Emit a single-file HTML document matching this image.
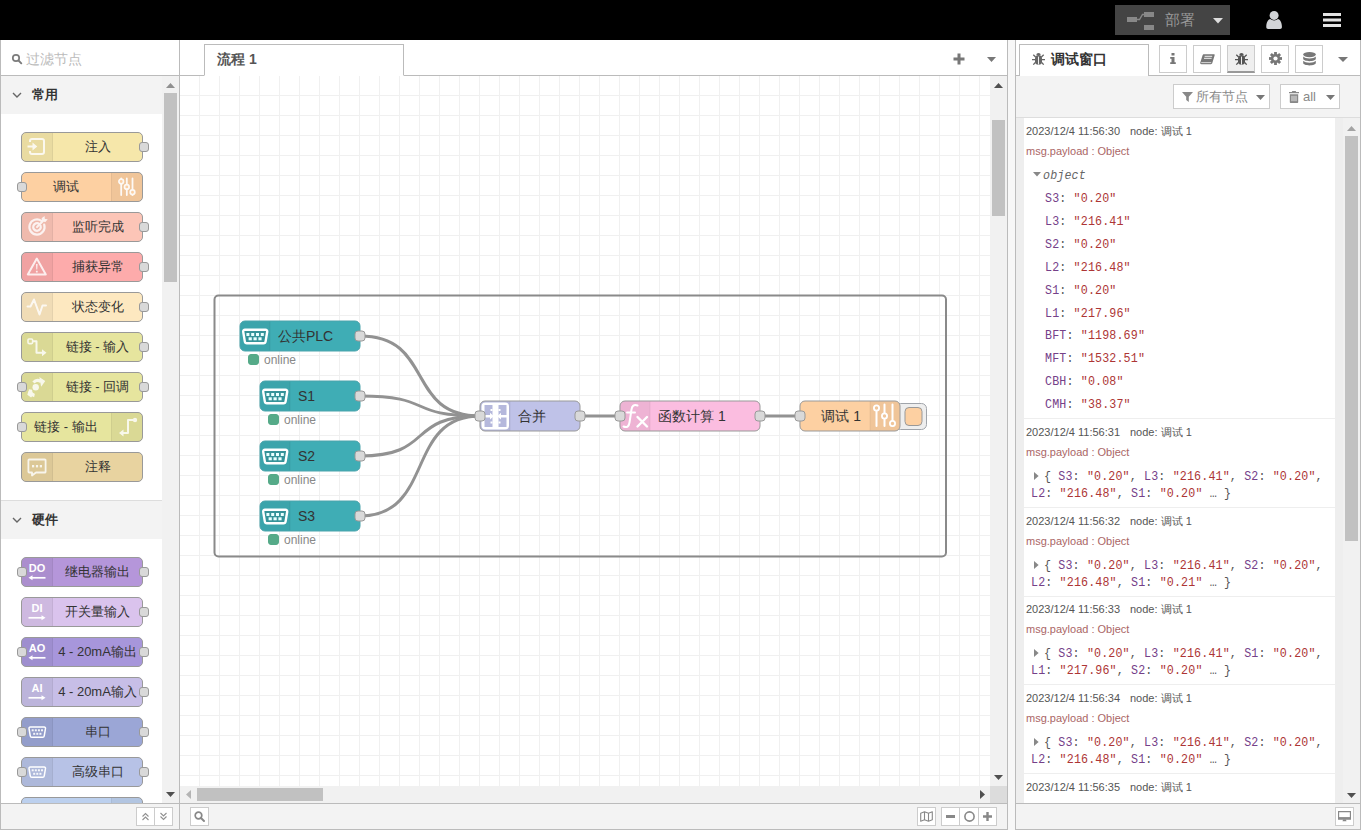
<!DOCTYPE html><html lang="zh"><head><meta charset="utf-8"><title>Node-RED</title><style>
*{box-sizing:border-box;margin:0;padding:0}
html,body{width:1361px;height:830px;overflow:hidden;background:#fff}
body{position:relative;font-family:"Liberation Sans",sans-serif;font-size:14px;color:#555;-webkit-font-smoothing:antialiased}
.abs{position:absolute}
#hdr{position:absolute;left:0;top:0;width:1361px;height:40px;background:#000}
#deploy{position:absolute;left:1115px;top:5px;width:115px;height:30px;background:#444}
#deploy .t{position:absolute;left:50px;top:0;line-height:30px;font-size:15px;color:#999;white-space:nowrap}
/* palette */
#pal{position:absolute;left:0;top:40px;width:180px;height:790px;border-left:1px solid #bbb;border-right:1px solid #bbb;border-bottom:1px solid #bbb;background:#fff;overflow:hidden}
#psearch{position:absolute;left:0;top:0;width:178px;height:36px;border-bottom:1px solid #bbb;background:#fff}
#psearch .t{position:absolute;left:25px;top:2px;line-height:35px;font-size:14px;color:#bbb;white-space:nowrap}
.cat{position:absolute;left:0;width:161px;height:38px;background:#f3f3f3}
.cat .t{position:absolute;left:31px;top:0;line-height:38px;font-size:13px;font-weight:bold;color:#333;white-space:nowrap}
.pn{position:absolute;left:20px;width:122px;height:30px;border:1px solid #999;border-radius:5px}
.pn .ic{position:absolute;top:0;width:30px;height:28px;background:rgba(0,0,0,.05)}
.pn .ic.l{left:0;border-right:1px solid rgba(0,0,0,.05);border-radius:4px 0 0 4px;width:31px}
.pn .ic.r{right:0;border-left:1px solid rgba(0,0,0,.05);border-radius:0 4px 4px 0;width:31px}
.pn .ic svg{position:absolute;left:0;top:0;width:30px;height:28px}
.pn .ic.r svg{left:1px}
.pn .lb{position:absolute;top:0;height:28px;line-height:27px;font-size:13px;color:#333;white-space:nowrap;text-align:center}
.pn .lb.l{left:31px;width:89px}
.pn .lb.r{left:0;width:88px}
.port{position:absolute;width:10px;height:10px;border:1px solid #999;background:#d9d9d9;border-radius:3px;top:9px}
.port.r{left:117px}.port.l{left:-5px}
/* scrollbars */
.sbt{position:absolute;background:#f1f1f1}
.sbh{position:absolute;background:#c1c1c1}
/* workspace */
#ws{position:absolute;left:180px;top:40px;width:828px;height:790px;border-right:1px solid #bbb;border-bottom:1px solid #bbb;background:#fff}
#wtabs{position:absolute;left:0;top:0;width:827px;height:36px;border-bottom:1px solid #bbb;background:#fff}
#wtab{position:absolute;left:24px;top:4px;width:200px;height:32px;border:1px solid #bbb;border-bottom:1px solid #fff;background:#fff}
#wtab .t{position:absolute;left:12px;top:0;line-height:29px;font-size:14px;color:#555;white-space:nowrap;font-weight:bold}
#chart{position:absolute;left:0;top:36px;width:810px;height:710px;background-color:#fff;
 background-image:linear-gradient(to right,#f0f0f0 1px,transparent 1px),linear-gradient(to bottom,#f0f0f0 1px,transparent 1px);
 background-size:20px 20px;background-position:19px 19px;overflow:hidden}
.foot{position:absolute;height:26px;background:#f3f3f3;border-top:1px solid #bbb}
.fbtn{position:absolute;top:3px;height:19px;background:#fff;border:1px solid #ccc}
/* sidebar */
#sep{position:absolute;left:1008px;top:40px;width:7px;height:790px;background:#f7f7f7}
#sb{position:absolute;left:1015px;top:40px;width:346px;height:790px;border-left:1px solid #bbb;border-right:1px solid #bbb;border-bottom:1px solid #bbb;background:#fff;overflow:hidden}
#stabs{position:absolute;left:0;top:0;width:344px;height:36px;border-bottom:1px solid #bbb;background:#fff}
#stab{position:absolute;left:3px;top:4px;width:130px;height:32px;border:1px solid #bbb;border-bottom:none;background:#fff}
#stab .t{position:absolute;left:31px;top:0;line-height:29px;font-size:14px;color:#333;font-weight:bold;white-space:nowrap}
.sbtn{position:absolute;top:5px;width:28px;height:28px;border:1px solid #ccc;background:#fff}
.sbtn.act{background:#efefef;border-bottom:2px solid #999}
#dtool{position:absolute;left:0;top:36px;width:344px;height:42px;background:#f3f3f3;border-bottom:1px solid #ddd}
.dbtn{position:absolute;top:8px;height:25px;background:#fff;border:1px solid #ccc;font-size:13px;color:#888;white-space:nowrap}
#dmsgs{position:absolute;left:0;top:78px;width:327px;height:685px;background:#fff;overflow:hidden}
.msg{position:absolute;left:0;width:327px;border-left:8px solid #eee;border-right:8px solid #eee;border-bottom:1px solid #eee;background:transparent}
.msg .d{position:absolute;left:2px;top:7px;font-size:11px;line-height:13px;color:#555;white-space:pre}
.msg .n{position:absolute;left:106px;top:7px;font-size:11px;line-height:13px;color:#555;white-space:pre}
.msg .tp{position:absolute;left:2px;top:27px;font-size:11px;line-height:13px;color:#a66;white-space:pre}
.mono{font-family:"Liberation Mono",monospace;font-size:11.67px;letter-spacing:.15px;white-space:pre;color:#555}
.msg .ln{position:absolute;line-height:15px;height:15px;transform:scaleY(1.07);transform-origin:0 10.6px}
.k{color:#754089}.s{color:#ad3535}
</style></head><body>
<div id="hdr">
<div id="deploy"><svg class="abs" style="left:0;top:0" width="50" height="30" viewBox="0 0 50 30"><g fill="#888"><rect x="12" y="12" width="10" height="5"/><rect x="29" y="7" width="10" height="5"/><rect x="29" y="20" width="10" height="5"/></g><path d="M22 14.5 L24.5 14.5 L27.5 9.5 L29 9.5" stroke="#888" stroke-width="1.4" fill="none"/></svg>
<span class="t">部署</span>
<svg class="abs" style="left:98px;top:13px" width="10" height="6" viewBox="0 0 10 6"><path d="M0 0h10L5 5.5z" fill="#ddd"/></svg></div>
<svg class="abs" style="left:1265px;top:10px" width="18" height="20" viewBox="0 0 18 20"><g fill="#d2d4d7"><circle cx="9.100" cy="5.400" r="4.500"/><path d="M1.300 17.200c-.2-4.600 1.600-7.600 4-8.200c1 .9 2.300 1.400 3.800 1.400s2.800-.5 3.800-1.400c2.400.6 4.200 3.600 4 8.200c0 1-.8 1.700-1.800 1.700H3.100c-1 0-1.800-.7-1.800-1.700z"/></g></svg>
<svg class="abs" style="left:1323px;top:13px" width="18" height="14" viewBox="0 0 18 14"><g fill="#e4e4e4"><rect y="0" width="18" height="3"/><rect y="5.500" width="18" height="3"/><rect y="11" width="18" height="3"/></g></svg>
</div>
<div id="pal">
<div id="psearch"><svg class="abs" style="left:10px;top:13px" width="12" height="12" viewBox="0 0 12 12"><circle cx="5" cy="5" r="3.200" stroke="#7c7c7c" stroke-width="1.700" fill="none"/><path d="M7.500 7.500l2.800 2.800" stroke="#7c7c7c" stroke-width="1.900" stroke-linecap="round"/></svg><span class="t">过滤节点</span></div>
<div class="cat" style="top:36px"><svg class="abs" style="left:11px;top:16px" width="10" height="7" viewBox="0 0 10 7"><path d="M1 1l4 4 4-4" stroke="#666" stroke-width="1.400" fill="none"/></svg><span class="t">常用</span></div>
<div class="pn" style="top:92px;background:#f6e7aa"><div class="ic l"><svg viewBox="0 0 30 28" opacity="0.82"><path d="M8 9V8a2 2 0 0 1 2-2h10a2 2 0 0 1 2 2v11a2 2 0 0 1-2 2H10a2 2 0 0 1-2-2v-1" stroke="#fff" stroke-width="2" fill="none"/><path d="M5.500 12.400h5V9.400l4.800 4.100-4.800 4.100v-3H5.500z" fill="#fff"/></svg></div><div class="lb l">注入</div><div class="port r"></div></div>
<div class="pn" style="top:132px;background:#fdd0a2"><div class="ic r"><svg viewBox="0 0 30 28" opacity="0.9"><g stroke="#fff" stroke-width="1.800" fill="none" stroke-linecap="round"><path d="M8.200 5.500V22M13.800 5.500V22M19.500 5.500V22"/></g><g stroke="#fff" stroke-width="1.700" fill="#fdd0a2"><circle cx="8.200" cy="8.500" r="2.300"/><circle cx="13.800" cy="13.900" r="2.300"/><circle cx="19.500" cy="19.200" r="2.300"/></g></svg></div><div class="lb r">调试</div><div class="port l"></div></div>
<div class="pn" style="top:172px;background:#fcc5b7"><div class="ic l"><svg viewBox="0 0 30 28" opacity="0.82"><g stroke="#fff" fill="none" stroke-width="2.200" stroke-linecap="round"><path d="M19.400 7.800A7.600 7.600 0 1 0 22.200 11.600"/><path d="M17.200 10.900A3.800 3.800 0 1 0 18.600 12.800"/></g><path d="M15 14L20.500 8.500" stroke="#fff" stroke-width="2" stroke-linecap="round"/><path d="M19.600 5.200l.5 3.300 3.300.5 2.400-2.700-2.900-.4-.4-2.900z" fill="#fff"/></svg></div><div class="lb l">监听完成</div><div class="port r"></div></div>
<div class="pn" style="top:212px;background:#fdabab"><div class="ic l"><svg viewBox="0 0 30 28" opacity="0.82"><path d="M14.800 5.500L5.800 21.500h18z" stroke="#fff" stroke-width="2" fill="none" stroke-linejoin="round"/><path d="M14 11h1.600l-.3 5.500h-1zM13.900 17.700h1.800v1.700h-1.800z" fill="#fff"/></svg></div><div class="lb l">捕获异常</div><div class="port r"></div></div>
<div class="pn" style="top:252px;background:#fde8c0"><div class="ic l"><svg viewBox="0 0 30 28" opacity="0.82"><path d="M5.500 13.500H8.500L12 6.500L17.500 21.500L20.500 12.500H24" stroke="#fff" stroke-width="2" fill="none" stroke-linecap="round" stroke-linejoin="round"/></svg></div><div class="lb l">状态变化</div><div class="port r"></div></div>
<div class="pn" style="top:292px;background:#e6e59e"><div class="ic l"><svg viewBox="0 0 30 28" opacity="0.82"><rect x="6" y="6" width="4.600" height="4.600" rx="1" stroke="#fff" stroke-width="1.600" fill="none"/><path d="M10.600 8.300H14.500V19.800H20.500" stroke="#fff" stroke-width="2" fill="none" stroke-linejoin="round"/><path d="M20 16.300l4.500 3.500-4.500 3.500z" fill="#fff"/></svg></div><div class="lb l">链接 - 输入</div><div class="port r"></div></div>
<div class="pn" style="top:332px;background:#e6e59e"><div class="ic l"><svg viewBox="0 0 30 28" opacity="0.82"><circle cx="13.700" cy="14.200" r="3.200" fill="#fff"/><path d="M11.500 9.500Q14.500 6 19 8.500" stroke="#fff" stroke-width="3.200" fill="none"/><path d="M16.800 4.300l6.400 3.200-3.200 6.400z" fill="#fff" transform="rotate(8 20 8)"/><path d="M8.500 16.500Q8 21.500 12.500 22.500" stroke="#fff" stroke-width="3.400" fill="none"/><path d="M6.500 17.800l5.800 3-3.200 3.800-3.800-2.800z" fill="#fff"/></svg></div><div class="lb l">链接 - 回调</div><div class="port l"></div><div class="port r"></div></div>
<div class="pn" style="top:372px;background:#e6e59e"><div class="ic r"><svg viewBox="0 0 30 28" opacity="0.82"><path d="M10 20H15V7H20" stroke="#fff" stroke-width="2" fill="none" stroke-linejoin="round"/><path d="M10.500 16.500L6 20l4.500 3.500z" fill="#fff"/><circle cx="22" cy="7" r="2.200" fill="#fff"/></svg></div><div class="lb r">链接 - 输出</div><div class="port l"></div></div>
<div class="pn" style="top:412px;background:#e8d3a0"><div class="ic l"><svg viewBox="0 0 30 28" opacity="0.82"><path d="M7.200 6.500h15.600a.8.800 0 0 1 .8.800v11.400a.8.800 0 0 1-.8.800H14l-4 3v-3H7.200a.8.800 0 0 1-.8-.8V7.300a.8.800 0 0 1 .8-.8z" stroke="#fff" stroke-width="1.800" fill="none" stroke-linejoin="round"/><g fill="#fff"><rect x="10" y="12" width="2.200" height="2.400"/><rect x="13.900" y="12" width="2.200" height="2.400"/><rect x="17.800" y="12" width="2.200" height="2.400"/></g></svg></div><div class="lb l">注释</div></div>
<div class="abs" style="left:0;top:460px;width:161px;height:1px;background:#ddd"></div>
<div class="cat" style="top:461px"><svg class="abs" style="left:11px;top:16px" width="10" height="7" viewBox="0 0 10 7"><path d="M1 1l4 4 4-4" stroke="#666" stroke-width="1.400" fill="none"/></svg><span class="t">硬件</span></div>
<div class="pn" style="top:517px;background:#b596da"><div class="ic l"><svg viewBox="0 0 30 28" opacity="1"><text x="15" y="14" text-anchor="middle" font-family="Liberation Sans,sans-serif" font-weight="bold" font-size="11" fill="#fff">DO</text><path d="M9.500 19.800H23.500" stroke="#fff" stroke-width="1.700"/><path d="M10.500 17.300L6.500 19.800l4 2.500z" fill="#fff"/></svg></div><div class="lb l">继电器输出</div><div class="port l"></div><div class="port r"></div></div>
<div class="pn" style="top:557px;background:#dac3ed"><div class="ic l"><svg viewBox="0 0 30 28" opacity="1"><text x="15" y="14" text-anchor="middle" font-family="Liberation Sans,sans-serif" font-weight="bold" font-size="11" fill="#fff">DI</text><path d="M6.500 19.800H20.500" stroke="#fff" stroke-width="1.700"/><path d="M19.500 17.300l4 2.500-4 2.500z" fill="#fff"/></svg></div><div class="lb l">开关量输入</div><div class="port r"></div></div>
<div class="pn" style="top:597px;background:#a796db"><div class="ic l"><svg viewBox="0 0 30 28" opacity="1"><text x="15" y="14" text-anchor="middle" font-family="Liberation Sans,sans-serif" font-weight="bold" font-size="11" fill="#fff">AO</text><path d="M9.500 19.800H23.500" stroke="#fff" stroke-width="1.700"/><path d="M10.500 17.300L6.500 19.800l4 2.500z" fill="#fff"/></svg></div><div class="lb l">4 - 20mA输出</div><div class="port l"></div><div class="port r"></div></div>
<div class="pn" style="top:637px;background:#c7bee7"><div class="ic l"><svg viewBox="0 0 30 28" opacity="1"><text x="15" y="14" text-anchor="middle" font-family="Liberation Sans,sans-serif" font-weight="bold" font-size="11" fill="#fff">AI</text><path d="M6.500 19.800H20.500" stroke="#fff" stroke-width="1.700"/><path d="M19.500 17.300l4 2.500-4 2.500z" fill="#fff"/></svg></div><div class="lb l">4 - 20mA输入</div><div class="port r"></div></div>
<div class="pn" style="top:677px;background:#9ba6d6"><div class="ic l"><svg viewBox="0 0 30 28" opacity="1"><path d="M8.300 9h13.900a1.300 1.300 0 0 1 1.300 1.500l-1.300 7.500a1.500 1.500 0 0 1-1.500 1.300H9.800a1.500 1.500 0 0 1-1.500-1.300L7 10.500A1.300 1.300 0 0 1 8.300 9z" stroke="#fff" stroke-width="1.500" fill="none"/><g fill="#fff" opacity=".9"><rect x="9.700" y="11.300" width="2" height="2"/><rect x="12.800" y="11.300" width="2" height="2"/><rect x="15.900" y="11.300" width="2" height="2"/><rect x="19" y="11.300" width="2" height="2"/><rect x="11.200" y="14.800" width="2" height="2"/><rect x="14.300" y="14.800" width="2" height="2"/><rect x="17.400" y="14.800" width="2" height="2"/></g></svg></div><div class="lb l">串口</div><div class="port l"></div><div class="port r"></div></div>
<div class="pn" style="top:717px;background:#b7c2e6"><div class="ic l"><svg viewBox="0 0 30 28" opacity="1"><path d="M8.300 9h13.900a1.300 1.300 0 0 1 1.300 1.500l-1.300 7.500a1.500 1.500 0 0 1-1.500 1.300H9.800a1.500 1.500 0 0 1-1.500-1.300L7 10.500A1.300 1.300 0 0 1 8.300 9z" stroke="#fff" stroke-width="1.500" fill="none"/><g fill="#fff" opacity=".9"><rect x="9.700" y="11.300" width="2" height="2"/><rect x="12.800" y="11.300" width="2" height="2"/><rect x="15.900" y="11.300" width="2" height="2"/><rect x="19" y="11.300" width="2" height="2"/><rect x="11.200" y="14.800" width="2" height="2"/><rect x="14.300" y="14.800" width="2" height="2"/><rect x="17.400" y="14.800" width="2" height="2"/></g></svg></div><div class="lb l">高级串口</div><div class="port l"></div><div class="port r"></div></div>
<div class="pn" style="top:757px;background:#bcd0ee"><div class="ic r"><svg viewBox="0 0 30 28" opacity="0.9"><ellipse cx="14" cy="8.500" rx="5" ry="3.500" fill="#fff"/></svg></div><div class="lb r"></div></div>
<div class="sbt" style="left:161px;top:36px;width:17px;height:727px"></div>
<div class="sbh" style="left:163px;top:53px;width:13px;height:189px"></div>
<svg class="abs" style="left:165px;top:43px" width="9" height="5" viewBox="0 0 9 5"><path d="M0 5h9L4.500 0z" fill="#909090"/></svg>
<svg class="abs" style="left:165px;top:752px" width="9" height="5" viewBox="0 0 9 5"><path d="M0 0h9L4.500 5z" fill="#505050"/></svg>
<div class="foot" style="left:0;top:763px;width:178px">
<div class="fbtn" style="left:135px;width:19px"><svg class="abs" style="left:4px;top:4px" width="9" height="9" viewBox="0 0 9 9"><path d="M1.500 4.500l3-3 3 3M1.500 8l3-3 3 3" stroke="#909090" stroke-width="1.100" fill="none"/></svg></div>
<div class="fbtn" style="left:153px;width:19px"><svg class="abs" style="left:4px;top:4px" width="9" height="9" viewBox="0 0 9 9"><path d="M1.500 1l3 3 3-3M1.500 4.500l3 3 3-3" stroke="#909090" stroke-width="1.100" fill="none"/></svg></div>
</div>
</div>
<div id="ws">
<div id="wtabs"><div id="wtab"><span class="t">流程 1</span></div>
<svg class="abs" style="left:773px;top:13px" width="12" height="12" viewBox="0 0 12 12"><path d="M4.500 .5h3v4h4v3h-4v4h-3v-4h-4v-3h4z" fill="#777"/></svg>
<svg class="abs" style="left:807px;top:17px" width="9" height="5" viewBox="0 0 9 5"><path d="M0 0h9L4.500 5z" fill="#777"/></svg>
</div>
<div id="chart">
<svg class="abs" style="left:0;top:0" width="810" height="710" viewBox="180 76 810 710" font-family="Liberation Sans,sans-serif">
<rect x="214.500" y="295.500" width="731.500" height="261" rx="4" fill="none" stroke="#8a8a8a" stroke-width="2"/>
<path d="M360 336 C435.0 336 405.0 416 480 416" stroke="#929292" stroke-width="3" fill="none"/>
<path d="M360 396 C435.0 396 405.0 416 480 416" stroke="#929292" stroke-width="3" fill="none"/>
<path d="M360 456 C435.0 456 405.0 416 480 416" stroke="#929292" stroke-width="3" fill="none"/>
<path d="M360 516 C435.0 516 405.0 416 480 416" stroke="#929292" stroke-width="3" fill="none"/>
<path d="M580 416 C610.0 416 590.0 416 620 416" stroke="#929292" stroke-width="3" fill="none"/>
<path d="M760 416 C790.0 416 770.0 416 800 416" stroke="#929292" stroke-width="3" fill="none"/>
<rect x="240" y="321" width="120" height="30" rx="5" fill="#3fadb5" stroke="#4aa3ab" stroke-width="1"/><path d="M245 321.5h25v29h-25a4.500 4.500 0 0 1-4.500-4.500v-20a4.500 4.500 0 0 1 4.500-4.500z" fill="rgba(0,0,0,0.05)"/><path d="M270 321.5v29" stroke="rgba(0,0,0,0.06)" stroke-width="1"/><g transform="translate(240,321)"><path d="M5 8.700h20.400a1.800 1.800 0 0 1 1.800 2.100l-1.600 9.600a2.200 2.200 0 0 1-2.200 1.900H7a2.200 2.200 0 0 1-2.200-1.900L3.200 10.800A1.800 1.800 0 0 1 5 8.700z" stroke="#fff" stroke-width="2.400" fill="rgba(0,0,0,0.1)"/><g fill="#e8ffff"><rect x="6.400" y="12" width="3" height="3"/><rect x="11.200" y="12" width="3" height="3"/><rect x="16" y="12" width="3" height="3"/><rect x="20.800" y="12" width="3" height="3"/><rect x="8.600" y="16.300" width="3.200" height="3"/><rect x="13.500" y="16.300" width="3.200" height="3"/><rect x="18.400" y="16.300" width="3.200" height="3"/></g></g><text x="278" y="341" font-size="14" fill="#333">公共PLC</text><rect x="355.0" y="331" width="10" height="10" rx="3" fill="#d9d9d9" stroke="#999" stroke-width="1"/><rect x="248.5" y="354.5" width="10" height="10" rx="2.500" fill="#5a8" stroke="#5a8"/><text x="264" y="363.5" font-size="12" fill="#888">online</text>
<rect x="260" y="381" width="100" height="30" rx="5" fill="#3fadb5" stroke="#4aa3ab" stroke-width="1"/><path d="M265 381.5h25v29h-25a4.500 4.500 0 0 1-4.500-4.500v-20a4.500 4.500 0 0 1 4.500-4.500z" fill="rgba(0,0,0,0.05)"/><path d="M290 381.5v29" stroke="rgba(0,0,0,0.06)" stroke-width="1"/><g transform="translate(260,381)"><path d="M5 8.700h20.400a1.800 1.800 0 0 1 1.800 2.100l-1.600 9.600a2.200 2.200 0 0 1-2.200 1.900H7a2.200 2.200 0 0 1-2.200-1.900L3.200 10.800A1.800 1.800 0 0 1 5 8.700z" stroke="#fff" stroke-width="2.400" fill="rgba(0,0,0,0.1)"/><g fill="#e8ffff"><rect x="6.400" y="12" width="3" height="3"/><rect x="11.200" y="12" width="3" height="3"/><rect x="16" y="12" width="3" height="3"/><rect x="20.800" y="12" width="3" height="3"/><rect x="8.600" y="16.300" width="3.200" height="3"/><rect x="13.500" y="16.300" width="3.200" height="3"/><rect x="18.400" y="16.300" width="3.200" height="3"/></g></g><text x="298" y="401" font-size="14" fill="#333">S1</text><rect x="355.0" y="391" width="10" height="10" rx="3" fill="#d9d9d9" stroke="#999" stroke-width="1"/><rect x="268.5" y="414.5" width="10" height="10" rx="2.500" fill="#5a8" stroke="#5a8"/><text x="284" y="423.5" font-size="12" fill="#888">online</text>
<rect x="260" y="441" width="100" height="30" rx="5" fill="#3fadb5" stroke="#4aa3ab" stroke-width="1"/><path d="M265 441.5h25v29h-25a4.500 4.500 0 0 1-4.500-4.500v-20a4.500 4.500 0 0 1 4.500-4.500z" fill="rgba(0,0,0,0.05)"/><path d="M290 441.5v29" stroke="rgba(0,0,0,0.06)" stroke-width="1"/><g transform="translate(260,441)"><path d="M5 8.700h20.400a1.800 1.800 0 0 1 1.800 2.100l-1.600 9.600a2.200 2.200 0 0 1-2.200 1.900H7a2.200 2.200 0 0 1-2.200-1.900L3.200 10.800A1.800 1.800 0 0 1 5 8.700z" stroke="#fff" stroke-width="2.400" fill="rgba(0,0,0,0.1)"/><g fill="#e8ffff"><rect x="6.400" y="12" width="3" height="3"/><rect x="11.200" y="12" width="3" height="3"/><rect x="16" y="12" width="3" height="3"/><rect x="20.800" y="12" width="3" height="3"/><rect x="8.600" y="16.300" width="3.200" height="3"/><rect x="13.500" y="16.300" width="3.200" height="3"/><rect x="18.400" y="16.300" width="3.200" height="3"/></g></g><text x="298" y="461" font-size="14" fill="#333">S2</text><rect x="355.0" y="451" width="10" height="10" rx="3" fill="#d9d9d9" stroke="#999" stroke-width="1"/><rect x="268.5" y="474.5" width="10" height="10" rx="2.500" fill="#5a8" stroke="#5a8"/><text x="284" y="483.5" font-size="12" fill="#888">online</text>
<rect x="260" y="501" width="100" height="30" rx="5" fill="#3fadb5" stroke="#4aa3ab" stroke-width="1"/><path d="M265 501.5h25v29h-25a4.500 4.500 0 0 1-4.500-4.500v-20a4.500 4.500 0 0 1 4.500-4.500z" fill="rgba(0,0,0,0.05)"/><path d="M290 501.5v29" stroke="rgba(0,0,0,0.06)" stroke-width="1"/><g transform="translate(260,501)"><path d="M5 8.700h20.400a1.800 1.800 0 0 1 1.800 2.100l-1.600 9.600a2.200 2.200 0 0 1-2.200 1.900H7a2.200 2.200 0 0 1-2.200-1.900L3.200 10.800A1.800 1.800 0 0 1 5 8.700z" stroke="#fff" stroke-width="2.400" fill="rgba(0,0,0,0.1)"/><g fill="#e8ffff"><rect x="6.400" y="12" width="3" height="3"/><rect x="11.200" y="12" width="3" height="3"/><rect x="16" y="12" width="3" height="3"/><rect x="20.800" y="12" width="3" height="3"/><rect x="8.600" y="16.300" width="3.200" height="3"/><rect x="13.500" y="16.300" width="3.200" height="3"/><rect x="18.400" y="16.300" width="3.200" height="3"/></g></g><text x="298" y="521" font-size="14" fill="#333">S3</text><rect x="355.0" y="511" width="10" height="10" rx="3" fill="#d9d9d9" stroke="#999" stroke-width="1"/><rect x="268.5" y="534.5" width="10" height="10" rx="2.500" fill="#5a8" stroke="#5a8"/><text x="284" y="543.5" font-size="12" fill="#888">online</text>
<rect x="480" y="401" width="100" height="30" rx="5" fill="#bfc2e8" stroke="#999" stroke-width="1"/><path d="M485 401.5h25v29h-25a4.500 4.500 0 0 1-4.500-4.500v-20a4.500 4.500 0 0 1 4.500-4.500z" fill="rgba(0,0,0,0.05)"/><path d="M510 401.5v29" stroke="rgba(0,0,0,0.06)" stroke-width="1"/><g transform="translate(480,401)" fill="#fff"><path fill-rule="evenodd" d="M5.500 1.500h19.500a4 4 0 0 1 4 4v19a4 4 0 0 1-4 4h-19.500a4 4 0 0 1-4-4v-19a4 4 0 0 1 4-4zM4.500 4v22h8v-22zM18.500 4v22h8v-22z"/><rect x="10.500" y="8" width="2" height="2"/><rect x="10.500" y="20.500" width="2" height="2"/><rect x="18.500" y="8" width="2" height="2"/><rect x="18.500" y="20.500" width="2" height="2"/><path d="M4 14h6v-2.200l3.800 3.400-3.800 3.400v-2.200H4z"/><path d="M27 14h-6v-2.200l-3.800 3.400 3.800 3.400v-2.200H27z"/></g><text x="518" y="421" font-size="14" fill="#333">合并</text><rect x="475.0" y="411" width="10" height="10" rx="3" fill="#d9d9d9" stroke="#999" stroke-width="1"/><rect x="575.0" y="411" width="10" height="10" rx="3" fill="#d9d9d9" stroke="#999" stroke-width="1"/>
<rect x="620" y="401" width="140" height="30" rx="5" fill="#fbbde0" stroke="#999" stroke-width="1"/><path d="M625 401.5h25v29h-25a4.500 4.500 0 0 1-4.500-4.500v-20a4.500 4.500 0 0 1 4.500-4.500z" fill="rgba(0,0,0,0.05)"/><path d="M650 401.5v29" stroke="rgba(0,0,0,0.06)" stroke-width="1"/><g transform="translate(620,401)" stroke="#fff" fill="none" stroke-linecap="round"><path d="M17.500 4.500c-3.500-1.500-5.500.5-6 4l-2 13c-.6 4-2.500 5.500-6 4" stroke-width="2"/><path d="M7 11.500h8" stroke-width="2"/><path d="M17.500 16l9.500 9.500M27 16l-9.500 9.500" stroke-width="2.400"/></g><text x="658" y="421" font-size="14" fill="#333">函数计算 1</text><rect x="615.0" y="411" width="10" height="10" rx="3" fill="#d9d9d9" stroke="#999" stroke-width="1"/><rect x="755.0" y="411" width="10" height="10" rx="3" fill="#d9d9d9" stroke="#999" stroke-width="1"/>
<rect x="895.500" y="403.500" width="31" height="26" rx="5" fill="#eee" stroke="#a0a4aa"/>
<rect x="905" y="407.500" width="17" height="18" rx="4" fill="#fdd0a2" stroke="#999"/>
<rect x="800" y="401" width="100" height="30" rx="5" fill="#fdd0a2" stroke="#999" stroke-width="1"/><path d="M870 401.5h25a4.500 4.500 0 0 1 4.500 4.500v20a4.500 4.500 0 0 1-4.500 4.500h-25z" fill="rgba(0,0,0,0.05)"/><path d="M870 401.5v29" stroke="rgba(0,0,0,0.06)" stroke-width="1"/><g transform="translate(870,401)"><g stroke="#fff" stroke-width="2" fill="none" stroke-linecap="round"><path d="M6.500 5V25M14.500 3.500V25M22.500 3.500V25"/></g><g stroke="#fff" stroke-width="1.800" fill="#f0c599"><circle cx="6.500" cy="7" r="2.600"/><circle cx="14.500" cy="15" r="2.600"/><circle cx="22.500" cy="22.500" r="2.600"/></g></g><text x="861" y="421" font-size="14" fill="#333" text-anchor="end">调试 1</text><rect x="795.0" y="411" width="10" height="10" rx="3" fill="#d9d9d9" stroke="#999" stroke-width="1"/>
</svg>
</div>
<div class="sbt" style="left:810px;top:36px;width:17px;height:710px"></div>
<div class="sbh" style="left:812px;top:80px;width:13px;height:96px"></div>
<svg class="abs" style="left:814px;top:43px" width="9" height="5" viewBox="0 0 9 5"><path d="M0 5h9L4.500 0z" fill="#505050"/></svg>
<svg class="abs" style="left:814px;top:735px" width="9" height="5" viewBox="0 0 9 5"><path d="M0 0h9L4.500 5z" fill="#505050"/></svg>
<div class="sbt" style="left:0;top:746px;width:810px;height:17px"></div>
<div class="sbh" style="left:17px;top:748px;width:126px;height:13px"></div>
<svg class="abs" style="left:6px;top:750px" width="5" height="9" viewBox="0 0 5 9"><path d="M5 0v9L0 4.500z" fill="#b4b4b4"/></svg>
<svg class="abs" style="left:800px;top:750px" width="5" height="9" viewBox="0 0 5 9"><path d="M0 0v9L5 4.500z" fill="#505050"/></svg>
<div class="abs" style="left:810px;top:746px;width:17px;height:17px;background:#dcdcdc"></div>
<div class="foot" style="left:0;top:763px;width:827px">
<div class="fbtn" style="left:10px;width:19px"><svg class="abs" style="left:3px;top:3px" width="11" height="11" viewBox="0 0 11 11"><circle cx="4.500" cy="4.500" r="3.300" stroke="#888" stroke-width="1.700" fill="none"/><path d="M7 7l3 3" stroke="#888" stroke-width="1.900" stroke-linecap="round"/></svg></div>
<div class="fbtn" style="left:737px;width:19px"><svg class="abs" style="left:2px;top:3px" width="13" height="11" viewBox="0 0 13 11"><path d="M.7 2.200L4.500.8l4 1.400L12.300.8v8L8.500 10.200l-4-1.400L.7 10.200zM4.500.8v8M8.500 2.200v8" stroke="#888" stroke-width="1.100" fill="none" stroke-linejoin="round"/></svg></div>
<div class="fbtn" style="left:761px;width:19px"><div class="abs" style="left:4px;top:7px;width:9px;height:2.500px;background:#888"></div></div>
<div class="fbtn" style="left:779px;width:20px"><svg class="abs" style="left:4px;top:3px" width="11" height="11" viewBox="0 0 11 11"><circle cx="5.500" cy="5.500" r="4.600" stroke="#888" stroke-width="1.600" fill="none"/></svg></div>
<div class="fbtn" style="left:798px;width:19px"><svg class="abs" style="left:4px;top:4px" width="9" height="9" viewBox="0 0 9 9"><path d="M3.300 0h2.400v3.300H9v2.400H5.700V9H3.300V5.700H0V3.300h3.300z" fill="#888"/></svg></div>
</div>
</div>
<div id="sep"></div>
<div id="sb">
<div id="stabs">
<div id="stab"><svg class="abs" style="left:12px;top:8px" width="13" height="12" viewBox="0 0 13 12"><g fill="#666"><path d="M3 5.600a3.500 3.500 0 0 1 7 0v2.600a3.500 3.500 0 0 1-7 0z"/><path d="M4.300 1.900a2.200 1.900 0 0 1 4.400 0z"/></g><path d="M0 6.700h13M1.300 1.800l2.300 2.200M11.700 1.800l-2.300 2.200M1.300 11.600l2.300-2.300M11.700 11.600l-2.300-2.300" stroke="#666" stroke-width="1.300" fill="none"/><path d="M6.500 3.600v7.900" stroke="#fff" stroke-width=".9"/></svg><span class="t">调试窗口</span></div>
<div class="sbtn" style="left:143px"><svg class="abs" style="left:10px;top:7px" width="6" height="11" viewBox="0 0 6 11"><path d="M1.500 0h3v2.500h-3zM.2 4h4.300v5.300h1.300V11H.2V9.300h1.300V5.700H.2z" fill="#777"/></svg></div>
<div class="sbtn" style="left:177px"><svg class="abs" style="left:6px;top:8px" width="15" height="11" viewBox="0 0 15 11"><path d="M4 .3h9.800c.8 0 1 .5.800 1.200L12.300 9c-.2.700-.7 1.200-1.500 1.200H1.500C.5 10.200 0 9.500.3 8.600L2.500 1.500C2.800.7 3.200.3 4 .3z" fill="#777"/><path d="M4.600 2.300h7.600M4 4.300h7.600" stroke="#fff" stroke-width=".9"/><path d="M1.200 8.600h10" stroke="#fff" stroke-width=".7"/></svg></div>
<div class="sbtn act" style="left:211px"><svg class="abs" style="left:7px;top:7px" width="13" height="12" viewBox="0 0 13 12"><g fill="#555"><path d="M3 5.600a3.500 3.500 0 0 1 7 0v2.600a3.500 3.500 0 0 1-7 0z"/><path d="M4.300 1.900a2.200 1.900 0 0 1 4.400 0z"/></g><path d="M0 6.700h13M1.300 1.800l2.300 2.200M11.700 1.800l-2.300 2.200M1.300 11.600l2.300-2.300M11.700 11.600l-2.300-2.300" stroke="#555" stroke-width="1.300" fill="none"/><path d="M6.500 3.600v7.900" stroke="#fff" stroke-width=".9"/></svg></div>
<div class="sbtn" style="left:245px"><svg class="abs" style="left:7px;top:6px" width="13" height="13" viewBox="0 0 13 13"><g transform="translate(6.500,6.500)" fill="#777"><rect x="-1.400" y="-6.500" width="2.800" height="3.200" transform="rotate(0)"/><rect x="-1.400" y="-6.500" width="2.800" height="3.200" transform="rotate(45)"/><rect x="-1.400" y="-6.500" width="2.800" height="3.200" transform="rotate(90)"/><rect x="-1.400" y="-6.500" width="2.800" height="3.200" transform="rotate(135)"/><rect x="-1.400" y="-6.500" width="2.800" height="3.200" transform="rotate(180)"/><rect x="-1.400" y="-6.500" width="2.800" height="3.200" transform="rotate(225)"/><rect x="-1.400" y="-6.500" width="2.800" height="3.200" transform="rotate(270)"/><rect x="-1.400" y="-6.500" width="2.800" height="3.200" transform="rotate(315)"/><circle r="4.600"/><circle r="2.100" fill="#fff"/></g></svg></div>
<div class="sbtn" style="left:279px"><svg class="abs" style="left:7px;top:6px" width="13" height="14" viewBox="0 0 13 14"><g fill="#777"><ellipse cx="6.500" cy="2.600" rx="6.300" ry="2.600"/><path d="M.2 4.500c1 1.300 3.500 2 6.300 2s5.300-.7 6.300-2v2.300c0 1.300-2.800 2.400-6.300 2.400S.2 8.100.2 6.800z"/><path d="M.2 8.700c1 1.300 3.500 2 6.300 2s5.300-.7 6.300-2V11c0 1.300-2.800 2.400-6.300 2.400S.2 12.300.2 11z"/></g></svg></div>
<svg class="abs" style="left:322px;top:17px" width="10" height="5" viewBox="0 0 10 5"><path d="M0 0h10L5 5z" fill="#777"/></svg>
</div>
<div id="dtool">
<div class="dbtn" style="left:157px;width:97px"><svg class="abs" style="left:8px;top:7px" width="11" height="11" viewBox="0 0 11 11"><path d="M0 0h11L6.800 4.800V10L4.200 8V4.800z" fill="#888"/></svg><span class="abs" style="left:22px;top:0;line-height:23px">所有节点</span><svg class="abs" style="left:82px;top:10px" width="9" height="5" viewBox="0 0 9 5"><path d="M0 0h9L4.500 5z" fill="#777"/></svg></div>
<div class="dbtn" style="left:264px;width:60px"><svg class="abs" style="left:8px;top:6px" width="10" height="12" viewBox="0 0 10 12"><path d="M3.300 0h3.400l.5 1H10v1.300H0V1h2.800zM.8 3.200h8.400V11c0 .6-.4 1-1 1H1.800c-.6 0-1-.4-1-1z" fill="#888"/><path d="M3 4.800v5.400M5 4.800v5.400M7 4.800v5.400" stroke="#fff" stroke-width=".8"/></svg><span class="abs" style="left:22px;top:0;line-height:23px">all</span><svg class="abs" style="left:45px;top:10px" width="9" height="5" viewBox="0 0 9 5"><path d="M0 0h9L4.500 5z" fill="#777"/></svg></div>
</div>
<div id="dmsgs">
<div class="msg" style="top:0px;height:301px"><span class="d">2023/12/4 11:56:30</span><span class="n">node: 调试 1</span><span class="tp">msg.payload : Object</span>
<svg class="abs" style="left:9px;top:54px" width="8" height="5" viewBox="0 0 8 5"><path d="M0 0h8L4 4.600z" fill="#888"/></svg>
<span class="ln mono" style="left:19px;top:51px;font-style:italic;color:#666">object</span>
<span class="ln mono" style="left:21px;top:74.25px"><span class="k">S3</span>: <span class="s">"0.20"</span></span>
<span class="ln mono" style="left:21px;top:97.10px"><span class="k">L3</span>: <span class="s">"216.41"</span></span>
<span class="ln mono" style="left:21px;top:119.95px"><span class="k">S2</span>: <span class="s">"0.20"</span></span>
<span class="ln mono" style="left:21px;top:142.80px"><span class="k">L2</span>: <span class="s">"216.48"</span></span>
<span class="ln mono" style="left:21px;top:165.65px"><span class="k">S1</span>: <span class="s">"0.20"</span></span>
<span class="ln mono" style="left:21px;top:188.50px"><span class="k">L1</span>: <span class="s">"217.96"</span></span>
<span class="ln mono" style="left:21px;top:211.35px"><span class="k">BFT</span>: <span class="s">"1198.69"</span></span>
<span class="ln mono" style="left:21px;top:234.20px"><span class="k">MFT</span>: <span class="s">"1532.51"</span></span>
<span class="ln mono" style="left:21px;top:257.05px"><span class="k">CBH</span>: <span class="s">"0.08"</span></span>
<span class="ln mono" style="left:21px;top:279.90px"><span class="k">CMH</span>: <span class="s">"38.37"</span></span>
</div>
<div class="msg" style="top:301px;height:89px"><span class="d">2023/12/4 11:56:31</span><span class="n">node: 调试 1</span><span class="tp">msg.payload : Object</span><svg class="abs" style="left:10px;top:53px" width="5" height="8" viewBox="0 0 5 8"><path d="M0 0v8L4.600 4z" fill="#888"/></svg><span class="ln mono" style="left:20px;top:50.600px">{ <span class="k">S3</span>: <span class="s">"0.20"</span>, <span class="k">L3</span>: <span class="s">"216.41"</span>, <span class="k">S2</span>: <span class="s">"0.20"</span>,</span><span class="ln mono" style="left:7px;top:67.600px"><span class="k">L2</span>: <span class="s">"216.48"</span>, <span class="k">S1</span>: <span class="s">"0.20"</span> … }</span></div>
<div class="msg" style="top:390px;height:89px"><span class="d">2023/12/4 11:56:32</span><span class="n">node: 调试 1</span><span class="tp">msg.payload : Object</span><svg class="abs" style="left:10px;top:53px" width="5" height="8" viewBox="0 0 5 8"><path d="M0 0v8L4.600 4z" fill="#888"/></svg><span class="ln mono" style="left:20px;top:50.600px">{ <span class="k">S3</span>: <span class="s">"0.20"</span>, <span class="k">L3</span>: <span class="s">"216.41"</span>, <span class="k">S2</span>: <span class="s">"0.20"</span>,</span><span class="ln mono" style="left:7px;top:67.600px"><span class="k">L2</span>: <span class="s">"216.48"</span>, <span class="k">S1</span>: <span class="s">"0.21"</span> … }</span></div>
<div class="msg" style="top:478px;height:89px"><span class="d">2023/12/4 11:56:33</span><span class="n">node: 调试 1</span><span class="tp">msg.payload : Object</span><svg class="abs" style="left:10px;top:53px" width="5" height="8" viewBox="0 0 5 8"><path d="M0 0v8L4.600 4z" fill="#888"/></svg><span class="ln mono" style="left:20px;top:50.600px">{ <span class="k">S3</span>: <span class="s">"0.20"</span>, <span class="k">L3</span>: <span class="s">"216.41"</span>, <span class="k">S1</span>: <span class="s">"0.20"</span>,</span><span class="ln mono" style="left:7px;top:67.600px"><span class="k">L1</span>: <span class="s">"217.96"</span>, <span class="k">S2</span>: <span class="s">"0.20"</span> … }</span></div>
<div class="msg" style="top:567px;height:89px"><span class="d">2023/12/4 11:56:34</span><span class="n">node: 调试 1</span><span class="tp">msg.payload : Object</span><svg class="abs" style="left:10px;top:53px" width="5" height="8" viewBox="0 0 5 8"><path d="M0 0v8L4.600 4z" fill="#888"/></svg><span class="ln mono" style="left:20px;top:50.600px">{ <span class="k">S3</span>: <span class="s">"0.20"</span>, <span class="k">L3</span>: <span class="s">"216.41"</span>, <span class="k">S2</span>: <span class="s">"0.20"</span>,</span><span class="ln mono" style="left:7px;top:67.600px"><span class="k">L2</span>: <span class="s">"216.48"</span>, <span class="k">S1</span>: <span class="s">"0.20"</span> … }</span></div>
<div class="msg" style="top:656px;height:89px"><span class="d">2023/12/4 11:56:35</span><span class="n">node: 调试 1</span><span class="tp">msg.payload : Object</span><svg class="abs" style="left:10px;top:53px" width="5" height="8" viewBox="0 0 5 8"><path d="M0 0v8L4.600 4z" fill="#888"/></svg><span class="ln mono" style="left:20px;top:50.600px">{ <span class="k">S3</span>: <span class="s">"0.20"</span>, <span class="k">L3</span>: <span class="s">"216.41"</span>, <span class="k">S2</span>: <span class="s">"0.20"</span>,</span><span class="ln mono" style="left:7px;top:67.600px"><span class="k">L2</span>: <span class="s">"216.48"</span>, <span class="k">S1</span>: <span class="s">"0.20"</span> … }</span></div>
</div>
<div class="sbt" style="left:327px;top:78px;width:17px;height:685px"></div>
<div class="sbh" style="left:329px;top:96px;width:13px;height:405px"></div>
<svg class="abs" style="left:331px;top:86px" width="9" height="5" viewBox="0 0 9 5"><path d="M0 5h9L4.500 0z" fill="#a3a3a3"/></svg>
<svg class="abs" style="left:331px;top:753px" width="9" height="5" viewBox="0 0 9 5"><path d="M0 0h9L4.500 5z" fill="#505050"/></svg>
<div class="foot" style="left:0;top:763px;width:344px"><div class="fbtn" style="left:319px;width:19px"><svg class="abs" style="left:2px;top:3px" width="13" height="11" viewBox="0 0 13 11"><path d="M.5.500h12v7.500H.5z" fill="#fff" stroke="#888" stroke-width="1.300"/><path d="M.5 7h12" stroke="#888" stroke-width="1.800"/><path d="M4.500 10.300h4l-.6-1.800H5.100z" fill="#888"/></svg></div></div>
</div>
</body></html>
